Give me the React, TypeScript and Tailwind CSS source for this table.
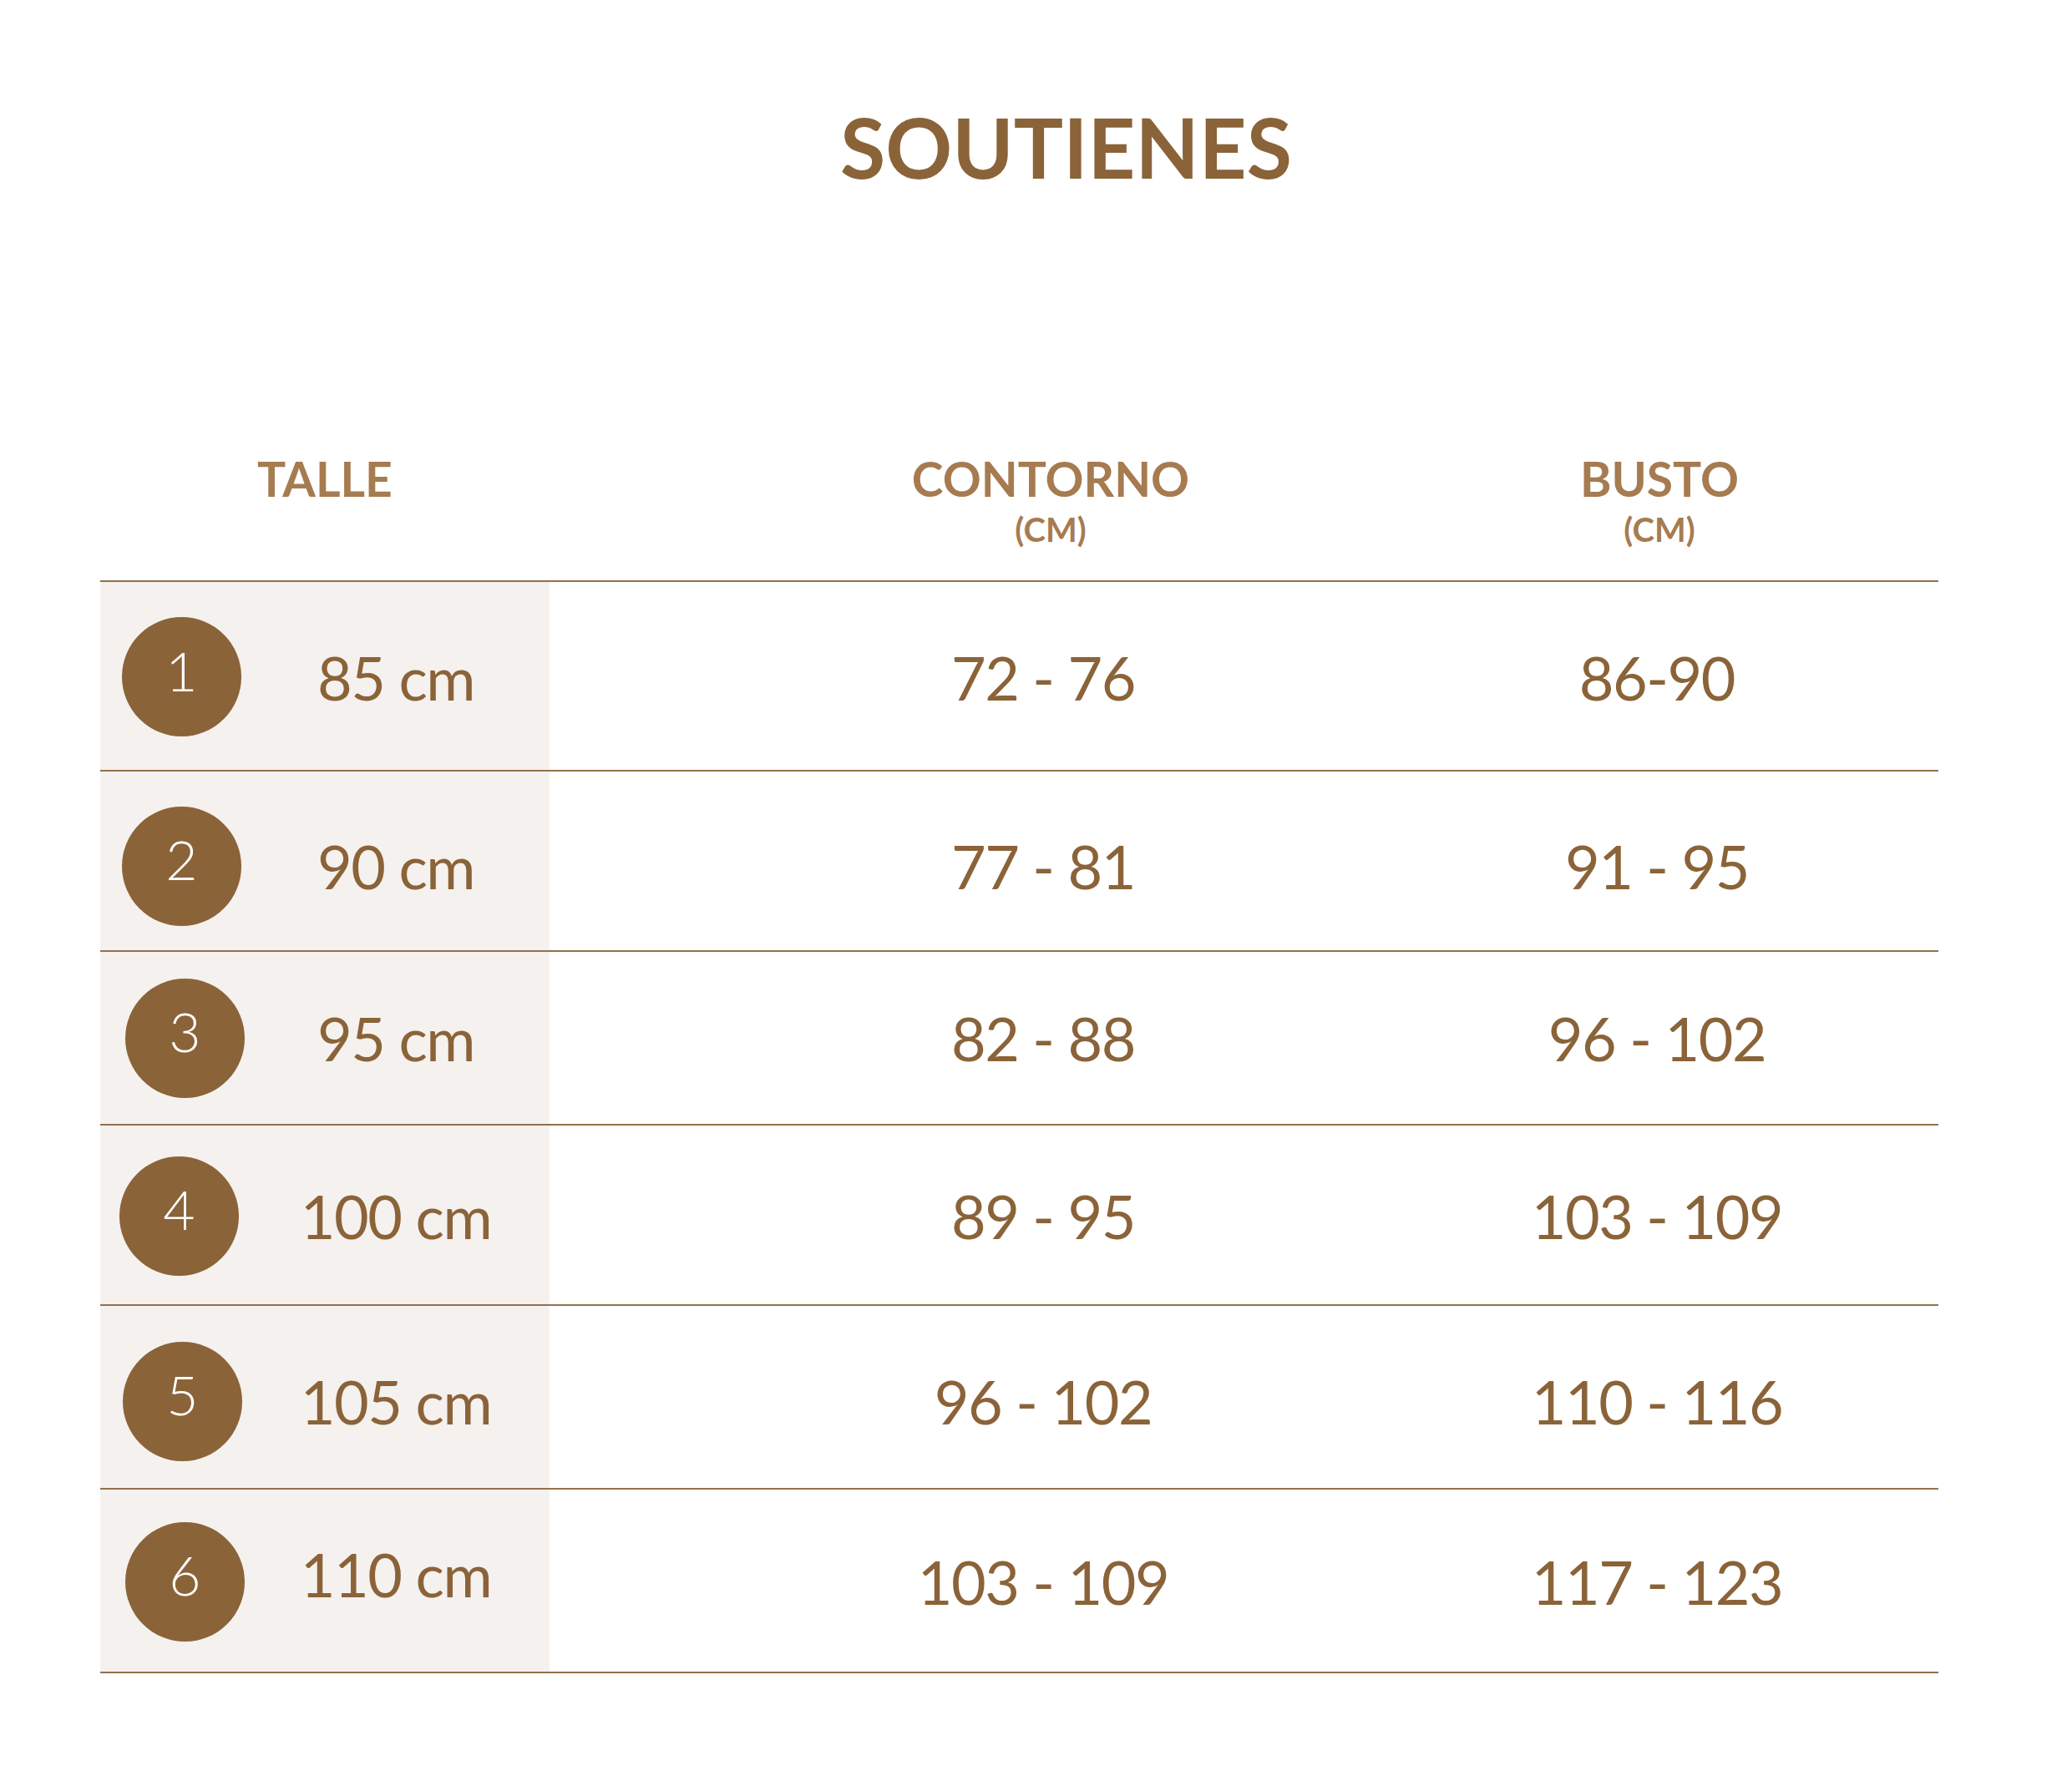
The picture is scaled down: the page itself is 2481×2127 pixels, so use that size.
const rows = [
  { n: "1", size: "85 cm", contorno: "72 - 76", busto: "86-90", h: "h-[227px] pt-[2px]", ml: "ml-[26px]", sizeCls: "" },
  { n: "2", size: "90 cm", contorno: "77 - 81", busto: "91 - 95", h: "h-[216px] pt-[12px]", ml: "ml-[26px]", sizeCls: "" },
  { n: "3", size: "95 cm", contorno: "82 - 88", busto: "96 - 102", h: "h-[208px]", ml: "ml-[30px]", sizeCls: "" },
  { n: "4", size: "100 cm", contorno: "89 - 95", busto: "103 - 109", h: "h-[216px] pt-[2px]", ml: "ml-[23px]", sizeCls: "" },
  { n: "5", size: "105 cm", contorno: "96 - 102", busto: "110 - 116", h: "h-[220px] pt-[10px]", ml: "ml-[27px]", sizeCls: "" },
  { n: "6", size: "110 cm", contorno: "103 - 109", busto: "117 - 123", h: "h-[220px] pt-[2px]", ml: "ml-[30px]", sizeCls: "pb-[18px]" },
];

export default function App() {
  return (
    <div className="w-[2481px] h-[2127px] bg-white font-['Lato','Liberation_Sans',sans-serif] text-[#8b6339]">
      <h1 className="pt-[126px] pl-[72px] text-center text-[99px] font-bold leading-none">SOUTIENES</h1>

      <div className="ml-[120px] mt-[320px] w-[2201px]">
        {/* header */}
        <div className="grid grid-cols-[538px_1182px_288px_1fr] items-start border-b-2 border-[#94704b] pb-[41px] text-[#a67b50] font-bold">
          <div className="text-center text-[57px] leading-none">TALLE</div>
          <div className="flex flex-col items-center pl-[18px]">
            <span className="text-[57px] leading-none">CONTORNO</span>
            <span className="mt-[12px] text-[40px] leading-none">(CM)</span>
          </div>
          <div className="flex flex-col items-center pl-[6px]">
            <span className="text-[57px] leading-none">BUSTO</span>
            <span className="mt-[12px] text-[40px] leading-none">(CM)</span>
          </div>
          <div />
        </div>

        {rows.map((r) => (
          <div
            key={r.n}
            className={`grid grid-cols-[538px_1182px_288px_1fr] border-b-2 border-[#94704b] bg-[linear-gradient(90deg,#f5f1ee_538px,transparent_538px)] font-normal tracking-[-1.5px] ${r.h}`}
          >
            <div className="grid grid-cols-[170px_1fr] items-center">
              <div
                className={`flex h-[143px] w-[143px] items-center justify-center rounded-full bg-[#8b6339] pb-[16px] text-[66px] font-light leading-none tracking-normal text-white ${r.ml}`}
              >
                {r.n}
              </div>
              <div className={`whitespace-nowrap text-center text-[72px] leading-none ${r.sizeCls}`}>{r.size}</div>
            </div>
            <div className="flex items-center justify-center whitespace-nowrap text-[72px] leading-none">{r.contorno}</div>
            <div className="flex items-center justify-center whitespace-nowrap text-[72px] leading-none">{r.busto}</div>
            <div />
          </div>
        ))}
      </div>
    </div>
  );
}
